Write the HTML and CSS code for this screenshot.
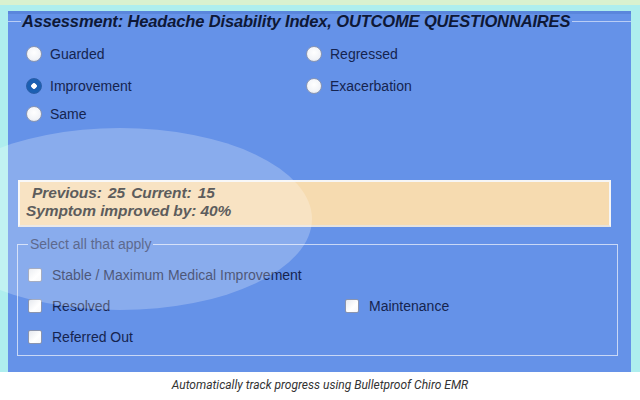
FILE: index.html
```html
<!DOCTYPE html>
<html>
<head>
<meta charset="utf-8">
<link rel="stylesheet" href="styles.css">
</head>
<body>
<div class="screen">
  <div class="strip"></div>
  <div class="panel">
    <div class="head"><span class="head-title">Assessment: Headache Disability Index, OUTCOME QUESTIONNAIRES</span></div>
    <div class="radios">
      <label class="opt"><span class="radio"></span>Guarded</label>
      <label class="opt"><span class="radio"></span>Regressed</label>
      <label class="opt"><span class="radio checked"></span>Improvement</label>
      <label class="opt"><span class="radio"></span>Exacerbation</label>
      <label class="opt"><span class="radio"></span>Same</label>
    </div>
    <div class="summary">
      <div class="sum-line indent">Previous: 25 Current: 15</div>
      <div class="sum-line">Symptom improved by: 40%</div>
    </div>
    <fieldset class="group">
      <legend class="group-title">Select all that apply</legend>
      <div class="checks">
        <label class="opt wide"><span class="check"></span>Stable / Maximum Medical Improvement</label>
        <label class="opt"><span class="check"></span>Resolved</label>
        <label class="opt"><span class="check"></span>Maintenance</label>
        <label class="opt"><span class="check"></span>Referred Out</label>
      </div>
    </fieldset>
  </div>
  <div class="lens"></div>
</div>
<div class="caption">Automatically track progress using Bulletproof Chiro EMR</div>
</body>
</html>
```

FILE: styles.css
```css
html, body {
  margin: 0;
  padding: 0;
  background: #ffffff;
}
body {
  width: 640px;
  height: 400px;
  overflow: hidden;
  font-family: "Liberation Sans", Arial, sans-serif;
}
.screen {
  position: relative;
  height: 372px;
  background: #aeeeee;
  padding: 0 9px 0 8px;
  box-sizing: border-box;
  overflow: hidden;
}
.strip {
  height: 5px;
  margin: 0 -9px 6px -8px;
  background: #d9f1cf;
}
.panel {
  height: 361px;
  background: #6592e8;
  box-shadow: inset 0 3px 0 #5a86dc;
  box-sizing: border-box;
  padding-top: 2px;
}
.head {
  display: flex;
  align-items: center;
  height: 16px;
}
.head::before {
  content: "";
  width: 13px;
  height: 1px;
  background: #b9cdf5;
}
.head::after {
  content: "";
  flex: 1;
  height: 1px;
  background: #b9cdf5;
}
.head-title {
  font-weight: bold;
  font-style: italic;
  font-size: 16.5px;
  letter-spacing: -0.15px;
  color: #0e1836;
  padding: 0 2px 0 1px;
  white-space: nowrap;
}
.radios {
  display: grid;
  grid-template-columns: 280px 1fr;
  grid-template-rows: 28px 36px 20px;
  margin: 11px 0 0 18px;
}
.opt {
  display: flex;
  align-items: center;
  gap: 9px;
  font-size: 14px;
  color: #15244f;
  white-space: nowrap;
}
.radio {
  width: 14px;
  height: 14px;
  border-radius: 50%;
  background: radial-gradient(circle at 50% 40%, #ffffff 0%, #f2f4f8 60%, #d6dce8 100%);
  border: 1px solid #8c97b2;
  flex: none;
  margin-right: -1px;
}
.radio.checked {
  background: radial-gradient(circle, #ffffff 0 2.5px, #1b5fb2 3px);
  border-color: #2a5ea8;
}
.summary {
  margin: 56px 0 0 10px;
  width: 593px;
  height: 47px;
  box-sizing: border-box;
  background: #f6dbb0;
  border: 2px solid #f6f6f6;
  border-bottom-color: #e6e3de;
  padding: 2px 0 0 6px;
  font-weight: bold;
  font-style: italic;
  font-size: 15.5px;
  letter-spacing: -0.1px;
  color: #2a2a2a;
}
.sum-line {
  line-height: 18px;
  white-space: nowrap;
}
.sum-line.indent {
  padding-left: 6px;
  word-spacing: 2px;
}
.group {
  margin: 9px 0 0 9px;
  width: 601px;
  height: 120px;
  box-sizing: border-box;
  border: 1px solid #c9d8f6;
  padding: 0 0 0 10px;
}
.group-title {
  font-size: 14px;
  color: #2b3a6a;
  padding: 0 2px;
  margin-left: 0;
  line-height: 16px;
}
.checks {
  display: grid;
  grid-template-columns: 317px 1fr;
  grid-template-rows: 31px 31px 31px;
  margin-top: 7px;
}
.wide {
  grid-column: 1 / 3;
}
.check {
  width: 12px;
  height: 12px;
  border: 1px solid #8a94ae;
  border-radius: 2px;
  background: linear-gradient(135deg, #e6e9ef 0%, #ffffff 60%, #f6f7fa 100%);
  flex: none;
  margin-right: 1px;
}
.lens {
  position: absolute;
  left: -72px;
  top: 128px;
  width: 384px;
  height: 182px;
  border-radius: 50%;
  background: rgba(255, 255, 255, 0.24);
  pointer-events: none;
}
.caption {
  height: 28px;
  line-height: 27px;
  text-align: center;
  font-family: Roboto, "Liberation Sans", sans-serif;
  font-style: italic;
  font-size: 12px;
  color: #333333;
}
```
